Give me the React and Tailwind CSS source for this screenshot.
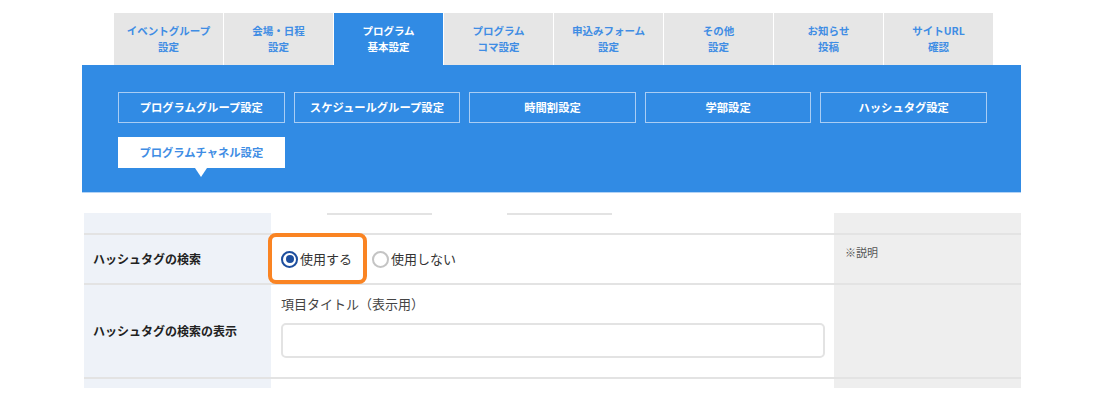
import React from "react";

const tabs = [
  ["イベントグループ", "設定"],
  ["会場・日程", "設定"],
  ["プログラム", "基本設定"],
  ["プログラム", "コマ設定"],
  ["申込みフォーム", "設定"],
  ["その他", "設定"],
  ["お知らせ", "投稿"],
  ["サイトURL", "確認"],
];

const buttons = [
  "プログラムグループ設定",
  "スケジュールグループ設定",
  "時間割設定",
  "学部設定",
  "ハッシュタグ設定",
];

function Radio({ checked }) {
  return (
    <span className="w-[17px] h-[17px] rounded-full flex items-center justify-center shrink-0 bg-white border-2 border-solid"
      style={{ borderColor: checked ? "#1d4e9e" : "#c4c4c4" }}>
      {checked && <span className="w-[8px] h-[8px] rounded-full bg-[#1d4e9e]" />}
    </span>
  );
}

export default function App() {
  return (
    <div className="w-[1097px] h-[410px] bg-white overflow-hidden" style={{ fontFamily: '"Noto Sans CJK JP", "Noto Sans", sans-serif' }}>
      {/* tabs */}
      <div className="pt-[13px] pl-[114px] flex gap-px">
        {tabs.map((t, i) => {
          const active = i === 2;
          return (
            <div key={i}
              className={`w-[109px] h-[52px] flex flex-col items-center justify-center font-bold text-[10.5px] leading-[16px] ${active ? "bg-[#318be4] text-white" : "bg-[#e6e6e6] text-[#3f8de4]"}`}>
              <span>{t[0]}</span>
              <span>{t[1]}</span>
            </div>
          );
        })}
      </div>

      {/* blue panel */}
      <div className="ml-[82px] w-[939px] bg-[#318be4] pt-[27px] pb-[24px] pl-[36px] border-b border-[#b3d3f5]">
        <div className="grid grid-cols-5 w-[869px] gap-x-[9px] gap-y-[14px]">
          {buttons.map((b) => (
            <div key={b} className="h-[31px] border border-[#a9cdf4] flex items-center justify-center text-white font-bold text-[11.3px]">
              {b}
            </div>
          ))}
          <div className="relative h-[31px] bg-white flex items-center justify-center text-[#3f8de4] font-bold text-[11.3px]">
            プログラムチャネル設定
            <span className="absolute left-1/2 -translate-x-1/2 top-full w-0 h-0 border-l-[6px] border-r-[6px] border-t-[9px] border-l-transparent border-r-transparent border-t-white" />
          </div>
        </div>
      </div>

      {/* table */}
      <div className="mt-[20px] ml-[84px] w-[937px] grid grid-cols-[187px_563px_187px]">
        {/* top row */}
        <div className="h-[20px] bg-[#eef2f8]" />
        <div className="h-[20px] flex pl-[56px] gap-[75px]">
          <div className="w-[105px] h-[2px] bg-[#e3e3e3]" />
          <div className="w-[105px] h-[2px] bg-[#e3e3e3]" />
        </div>
        <div className="h-[20px] bg-[#eeeeee]" />

        {/* row 1 */}
        <div className="h-[50px] bg-[#eef2f8] border-t-2 border-[#e3e3e3] flex items-center pl-[9px] font-bold text-[12px] text-[#222]">
          ハッシュタグの検索
        </div>
        <div className="h-[50px] border-t-2 border-[#e3e3e3] flex items-center pl-[10px] text-[13px] text-[#333]">
          <label className="relative flex items-center gap-[2px]">
            <span className="absolute -left-[13px] -top-[16px] w-[99px] h-[51px] rounded-[8px] border-[4px] border-[#fa8423]" />
            <Radio checked />
            <span>使用する</span>
          </label>
          <label className="flex items-center gap-[2px] ml-[20px]">
            <Radio />
            <span>使用しない</span>
          </label>
        </div>
        <div className="h-[50px] bg-[#eeeeee] border-t-2 border-[#e3e3e3] pl-[11px] pt-[9px] text-[11px] text-[#555]">
          ※説明
        </div>

        {/* row 2 */}
        <div className="h-[94px] bg-[#eef2f8] border-t-2 border-[#e3e3e3] flex items-center pl-[9px] font-bold text-[12px] text-[#222]">
          ハッシュタグの検索の表示
        </div>
        <div className="h-[94px] border-t-2 border-[#e3e3e3] pl-[10px] pr-[9px] pt-[9px]">
          <div className="text-[13px] leading-[20px] text-[#444]">項目タイトル（表示用）</div>
          <div className="mt-[9px] h-[35px] w-full rounded-[5px] border-2 border-[#e3e3e3] bg-white" />
        </div>
        <div className="h-[94px] bg-[#eeeeee] border-t-2 border-[#e3e3e3]" />

        {/* row 3 */}
        <div className="h-[11px] bg-[#eef2f8] border-t-2 border-[#e3e3e3]" />
        <div className="h-[11px] border-t-2 border-[#e3e3e3]" />
        <div className="h-[11px] bg-[#eeeeee] border-t-2 border-[#e3e3e3]" />
      </div>
    </div>
  );
}
